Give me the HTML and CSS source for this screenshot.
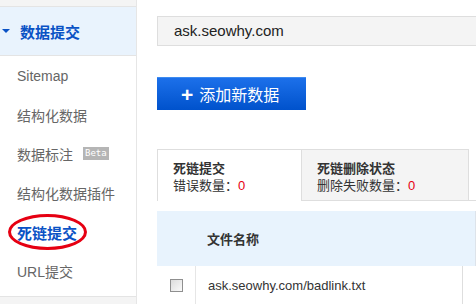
FILE: index.html
```html
<!DOCTYPE html>
<html lang="zh-CN">
<head>
  <meta charset="UTF-8" />
  <title>死链提交</title>
  <link rel="stylesheet" href="styles.css">
</head>
<body>
  <div class="page">
    <div class="sidebar">
      <div class="side-top"></div>
      <div class="side-head"><span class="arrow"></span>数据提交</div>
      <ul class="side-menu">
        <li>Sitemap</li>
        <li>结构化数据</li>
        <li>数据标注 <span class="beta">Beta</span></li>
        <li>结构化数据插件</li>
        <li class="active"><span class="circled">死链提交</span></li>
        <li>URL提交</li>
      </ul>
      <div class="side-bottom"></div>
    </div>

    <div class="main">
      <div class="site-box">ask.seowhy.com</div>

      <button class="add-btn"><span class="plus">+</span>添加新数据</button>

      <div class="tabs">
        <div class="tab current">
          <b>死链提交</b>
          <span>错误数量：<em>0</em></span>
        </div>
        <div class="tab">
          <b>死链删除状态</b>
          <span>删除失败数量：<em>0</em></span>
        </div>
        <div class="tab-rest"></div>
      </div>

      <div class="table">
        <div class="thead">
          <div class="col-check"></div>
          <div class="col-name">文件名称</div>
        </div>
        <div class="trow">
          <div class="col-check"><span class="checkbox"></span></div>
          <div class="col-name">ask.seowhy.com/badlink.txt</div>
        </div>
      </div>
    </div>
  </div>
</body>
</html>
```

FILE: styles.css
```css
body {
  margin: 0;
  font-family: "Liberation Sans", "Noto Sans CJK SC", sans-serif;
  background: #fff;
  overflow: hidden;
}
.page {
  display: flex;
  height: 304px;
}
.sidebar {
  width: 136px;
  flex: none;
  border-right: 1px solid #e6e6e6;
  display: flex;
  flex-direction: column;
}
.side-top {
  height: 6px;
  background: #f4f4f4;
  border-bottom: 1px solid #e4e4e4;
}
.side-head {
  height: 48px;
  background: #e9f3fd;
  border-bottom: 1px solid #e4e4e4;
  display: flex;
  align-items: center;
  padding-left: 2px;
  font-size: 15px;
  font-weight: bold;
  color: #0a52c5;
}
.arrow {
  width: 0;
  height: 0;
  border-left: 4px solid transparent;
  border-right: 4px solid transparent;
  border-top: 4px solid #0a52c5;
  margin-right: 10px;
}
.side-menu {
  list-style: none;
  margin: 0;
  padding: 0 0 6px;
  border-bottom: 1px solid #e4e4e4;
}
.side-menu li {
  height: 39px;
  display: flex;
  align-items: center;
  padding-left: 17px;
  font-size: 14px;
  color: #666;
}
.side-menu li.active {
  padding-left: 8px;
}
.circled {
  border: 3px solid #e60012;
  border-radius: 50%;
  padding: 5px 7px 4px 6px;
  font-weight: bold;
  font-size: 15px;
  color: #0a52c5;
}
.beta {
  background: #b5b5b5;
  color: #fff;
  font-family: "DejaVu Sans Mono", monospace;
  font-size: 9px;
  padding: 0 2px;
  margin-left: 10px;
  line-height: 13px;
}
.side-bottom {
  flex: 1;
  background: #f4f4f4;
}
.main {
  flex: 1;
  padding-left: 20px;
  padding-top: 16px;
  overflow: hidden;
}
.site-box {
  width: 400px;
  height: 28px;
  border: 1px solid #dedede;
  background: #f4f4f4;
  font-size: 15px;
  color: #222;
  line-height: 28px;
  padding-left: 16px;
}
.add-btn {
  display: flex;
  align-items: center;
  margin-top: 31px;
  width: 149px;
  height: 33px;
  border: none;
  border-top: 1px solid #3d8bf0;
  background: linear-gradient(#1c70ea, #0052cc);
  color: #fff;
  font-family: "Noto Sans CJK SC", sans-serif;
  font-size: 16px;
  padding: 0 0 0 24px;
}
.plus {
  font-family: "Liberation Sans", sans-serif;
  font-weight: bold;
  font-size: 21px;
  margin-right: 6px;
  line-height: 1;
}
.tabs {
  display: flex;
  margin-top: 39px;
  height: 52px;
}
.tab {
  box-sizing: border-box;
  height: 52px;
  padding: 10px 0 0 15px;
  border: 1px solid #dedede;
  background: #f4f4f4;
  display: flex;
  flex-direction: column;
  font-size: 13px;
  color: #333;
  line-height: 17px;
  width: 168px;
}
.tab.current {
  width: 144px;
  background: #fff;
  border-right: none;
  border-bottom: none;
}
.tab b {
  color: #333;
}
.tab em {
  font-style: normal;
  color: #e60012;
}
.tab-rest {
  flex: 1;
  border-bottom: 1px solid #dedede;
}
.table {
  margin-top: 10px;
  font-size: 13px;
  color: #333;
}
.thead, .trow {
  display: flex;
}
.thead {
  height: 55px;
  background: #e8f3fd;
  border-right: 1px solid #dde3ea;
  width: 318px;
}
.thead .col-name {
  font-weight: bold;
  display: flex;
  align-items: center;
  padding-left: 12px;
}
.col-check {
  width: 38px;
  flex: none;
  display: flex;
  align-items: center;
  justify-content: center;
}
.trow {
  height: 38px;
  width: 305px;
  border-right: 1px solid #dedede;
}
.trow .col-check {
  border-right: 1px solid #e6e6e6;
}
.trow .col-name {
  flex: 1;
  display: flex;
  align-items: center;
  padding-left: 12px;
}
.checkbox {
  width: 11px;
  height: 11px;
  border: 1px solid #8f8f8f;
  background: linear-gradient(135deg, #dcdcdc, #fafafa);
}
```
